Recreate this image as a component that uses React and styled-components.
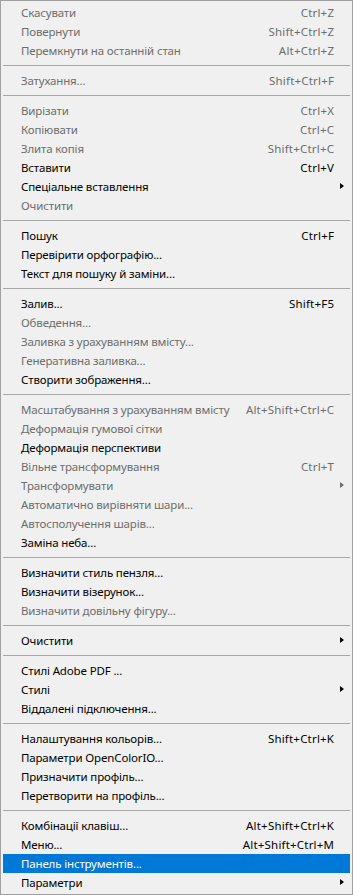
import React from "react";
import styled, { createGlobalStyle } from "styled-components";

const Global = createGlobalStyle`
  html, body { margin: 0; padding: 0; background: #f0f0f0; }
  #root { width: 353px; }
`;

const Menu = styled.div`
  box-sizing: border-box;
  width: 353px;
  height: 895px;
  background: #f0f0f0;
  border: 1px solid #a0a0a0;
  padding: 2px;
  display: flex;
  flex-direction: column;
  font-family: "Segoe UI", "Noto Sans", sans-serif;
  font-size: 11.5px;
  letter-spacing: -0.15px;
`;

const Row = styled.div`
  height: 19px;
  line-height: 19px;
  display: flex;
  align-items: center;
  padding: 0 16px 0 18px;
  background: ${(p) => (p.$active ? "#0078d7" : "transparent")};
  color: ${(p) => (p.$active ? "#ffffff" : p.$disabled ? "#6d6d6d" : "#000000")};
  position: relative;
  white-space: nowrap;
`;

const Label = styled.span`
  flex: 1;
  min-width: 0;
`;

const Shortcut = styled.span`
  flex: none;
  margin-left: 12px;
  letter-spacing: 0.2px;
  margin-right: -0.2px;
`;

const Arrow = styled.span`
  position: absolute;
  right: 6px;
  top: 6px;
  width: 0;
  height: 0;
  border-top: 3.5px solid transparent;
  border-bottom: 3.5px solid transparent;
  border-left: 4px solid ${(p) => (p.$disabled ? "#6d6d6d" : p.$active ? "#fff" : "#000")};
`;

const Separator = styled.div`
  height: 11px;
  display: flex;
  align-items: center;
  &::after {
    content: "";
    display: block;
    width: 100%;
    height: 1px;
    background: #a8a8a8;
  }
`;

const groups = [
  [
    { t: "Скасувати", k: "Ctrl+Z", d: 1 },
    { t: "Повернути", k: "Shift+Ctrl+Z", d: 1 },
    { t: "Перемкнути на останній стан", k: "Alt+Ctrl+Z", d: 1 },
  ],
  [{ t: "Затухання...", k: "Shift+Ctrl+F", d: 1 }],
  [
    { t: "Вирізати", k: "Ctrl+X", d: 1 },
    { t: "Копіювати", k: "Ctrl+C", d: 1 },
    { t: "Злита копія", k: "Shift+Ctrl+C", d: 1 },
    { t: "Вставити", k: "Ctrl+V" },
    { t: "Спеціальне вставлення", sub: 1 },
    { t: "Очистити", d: 1 },
  ],
  [
    { t: "Пошук", k: "Ctrl+F" },
    { t: "Перевірити орфографію..." },
    { t: "Текст для пошуку й заміни..." },
  ],
  [
    { t: "Залив...", k: "Shift+F5" },
    { t: "Обведення...", d: 1 },
    { t: "Заливка з урахуванням вмісту...", d: 1 },
    { t: "Генеративна заливка...", d: 1 },
    { t: "Створити зображення..." },
  ],
  [
    { t: "Масштабування з урахуванням вмісту", k: "Alt+Shift+Ctrl+C", d: 1 },
    { t: "Деформація гумової сітки", d: 1 },
    { t: "Деформація перспективи" },
    { t: "Вільне трансформування", k: "Ctrl+T", d: 1 },
    { t: "Трансформувати", d: 1, sub: 1 },
    { t: "Автоматично вирівняти шари...", d: 1 },
    { t: "Автосполучення шарів...", d: 1 },
    { t: "Заміна неба..." },
  ],
  [
    { t: "Визначити стиль пензля..." },
    { t: "Визначити візерунок..." },
    { t: "Визначити довільну фігуру...", d: 1 },
  ],
  [{ t: "Очистити", sub: 1 }],
  [
    { t: "Стилі Adobe PDF ..." },
    { t: "Стилі", sub: 1 },
    { t: "Віддалені підключення..." },
  ],
  [
    { t: "Налаштування кольорів...", k: "Shift+Ctrl+K" },
    { t: "Параметри OpenColorIO..." },
    { t: "Призначити профіль..." },
    { t: "Перетворити на профіль..." },
  ],
  [
    { t: "Комбінації клавіш...", k: "Alt+Shift+Ctrl+K" },
    { t: "Меню...", k: "Alt+Shift+Ctrl+M" },
    { t: "Панель інструментів...", a: 1 },
    { t: "Параметри", sub: 1 },
  ],
];

export default function App() {
  return (
    <>
      <Global />
      <Menu>
        {groups.map((g, gi) => (
          <React.Fragment key={gi}>
            {gi > 0 && <Separator />}
            {g.map((it, i) => (
              <Row key={i} $disabled={!!it.d} $active={!!it.a}>
                <Label>{it.t}</Label>
                {it.k && <Shortcut>{it.k}</Shortcut>}
                {it.sub && <Arrow $disabled={!!it.d} $active={!!it.a} />}
              </Row>
            ))}
          </React.Fragment>
        ))}
      </Menu>
    </>
  );
}
